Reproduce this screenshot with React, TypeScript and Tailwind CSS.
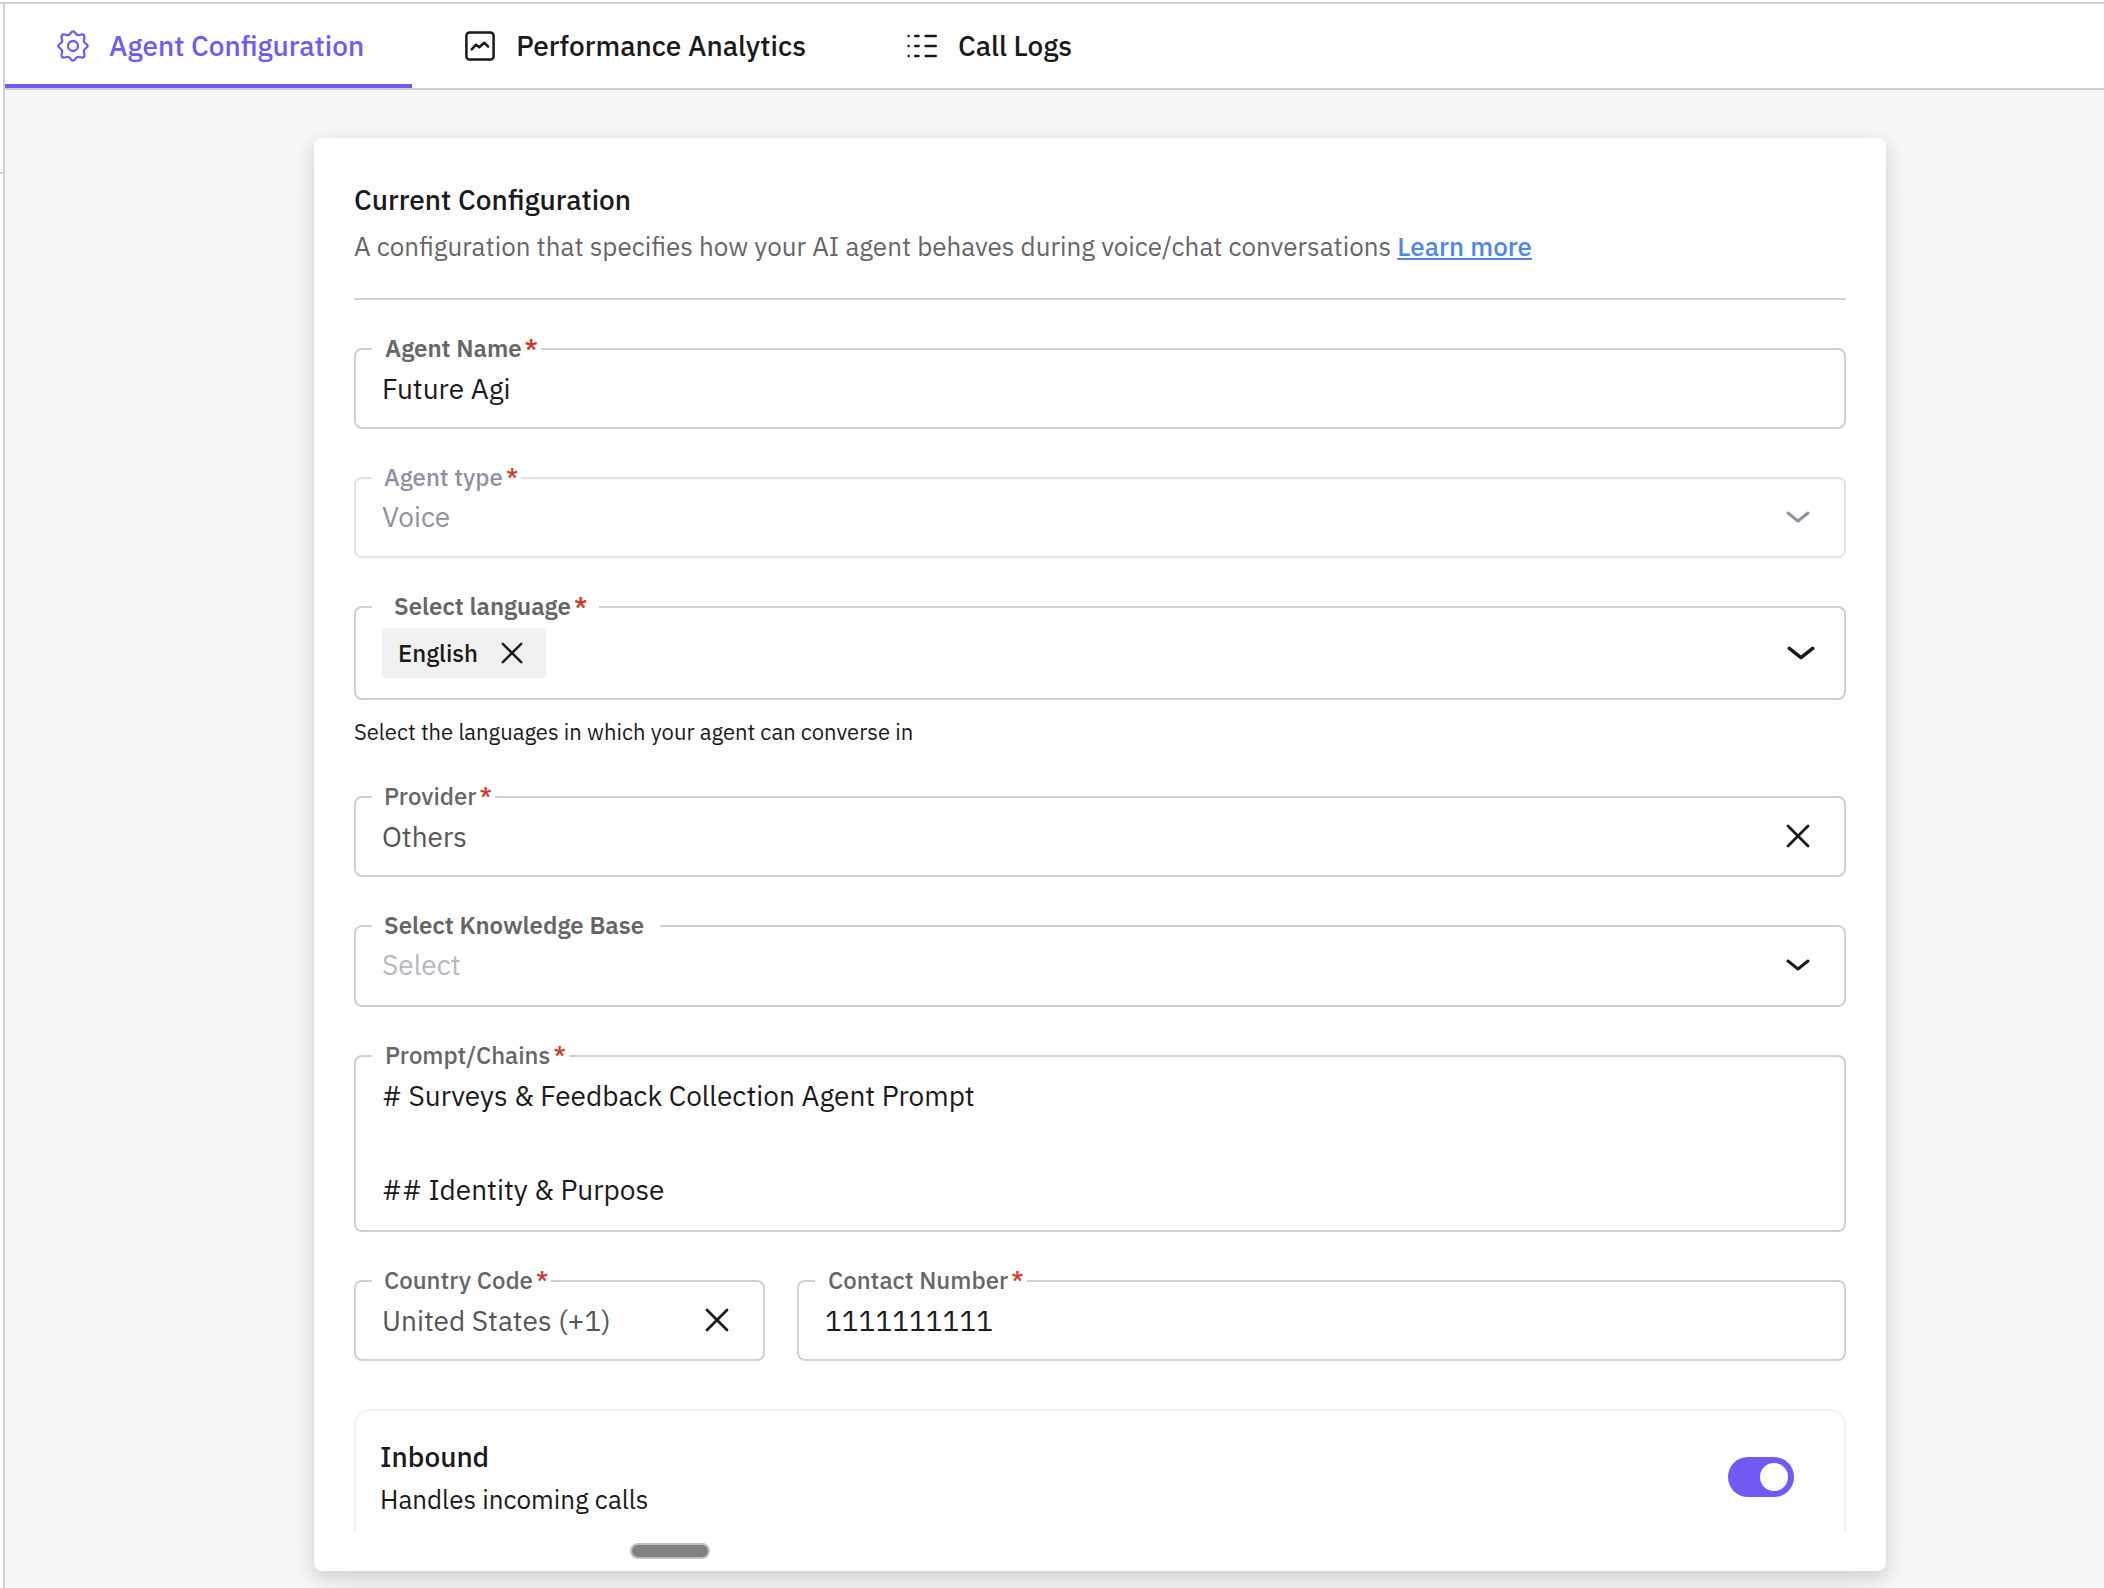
import type { ReactNode } from "react";

type IconProps = { className?: string };

const GearIcon = ({ className }: IconProps) => (
    <svg className={className} viewBox="0 0 32 32" fill="none" stroke="currentColor" strokeWidth="2.3" strokeLinejoin="round">
        <path d="M16 1.3C18.4 1.3 18.4 5.2 21 5.2 23.4 5.2 25.2 3.4 26.9 5.1 28.6 6.8 26.8 8.6 26.8 11 26.8 13.6 30.7 13.6 30.7 16 30.7 18.4 26.8 18.4 26.8 21 26.8 23.4 28.6 25.2 26.9 26.9 25.2 28.6 23.4 26.8 21 26.8 18.4 26.8 18.4 30.7 16 30.7 13.6 30.7 13.6 26.8 11 26.8 8.6 26.8 6.8 28.6 5.1 26.9 3.4 25.2 5.2 23.4 5.2 21 5.2 18.4 1.3 18.4 1.3 16 1.3 13.6 5.2 13.6 5.2 11 5.2 8.6 3.4 6.8 5.1 5.1 6.8 3.4 8.6 5.2 11 5.2 13.6 5.2 13.6 1.3 16 1.3Z" />
        <circle cx="16" cy="16" r="5" />
    </svg>
);

const ChartIcon = ({ className }: IconProps) => (
    <svg className={className} viewBox="0 0 32 32" fill="none" stroke="currentColor" strokeWidth="2.5" strokeLinecap="round" strokeLinejoin="round">
        <rect x="2.4" y="2.4" width="27.2" height="27.2" rx="3.2" />
        <path d="m7.7 19.3 4.3-4.6 3.2 2.6 5.1-4.6 3.8 4" />
    </svg>
);

const LogsIcon = ({ className }: IconProps) => (
    <svg className={className} viewBox="0 0 32 32" fill="none" stroke="currentColor" strokeWidth="2.4" strokeLinecap="round">
        <path d="M2.6 6h.1M9.2 6h3.4M19.6 6h10.2M2.6 16h.1M9.2 16h3.4M19.6 16h10.2M2.6 26h.1M9.2 26h3.4M19.6 26h10.2" />
    </svg>
);

const ChevronIcon = ({ className }: IconProps) => (
    <svg className={className} viewBox="0 0 24 12" fill="none" stroke="currentColor" strokeWidth="3" strokeLinecap="round" strokeLinejoin="round">
        <path d="m2 2 10 8 10-8" />
    </svg>
);

const CloseIcon = ({ className }: IconProps) => (
    <svg className={className} viewBox="0 0 24 24" fill="none" stroke="currentColor" strokeWidth="2.8" strokeLinecap="round">
        <path d="m2 2 20 20M22 2 2 22" />
    </svg>
);

type FieldProps = {
    id: string;
    label: string;
    required?: boolean;
    disabled?: boolean;
    className?: string;
    legendClass?: string;
    labelClass?: string;
    children: ReactNode;
};

const Field = ({ id, label, required, disabled, className = "h-[92px]", legendClass = "pl-3 pr-[3px]", labelClass = "font-medium", children }: FieldProps) => (
    <fieldset className={`min-w-0 rounded-lg border-2 ${disabled ? "border-[#e2e2e8]" : "border-[#d0d0d0]"} ${className}`}>
        <legend className={`ml-4 h-6 text-2xl leading-[22px] whitespace-nowrap ${legendClass} ${labelClass}`}>
            <label htmlFor={id} className={disabled ? "text-[#938fa3]" : "text-[#666]"}>
                {label}
            </label>
            {required && <span className="ml-[3px] text-[#cf3a2e]">*</span>}
        </legend>
        {children}
    </fieldset>
);

const inputClass = "h-[54px] w-full min-w-0 appearance-none bg-transparent text-[28px] outline-none";

const tabs = [
    { label: "Agent Configuration", icon: GearIcon, active: true },
    { label: "Performance Analytics", icon: ChartIcon, active: false },
    { label: "Call Logs", icon: LogsIcon, active: false },
];

const App = () => {
    return (
        <div className="flex min-h-screen flex-col bg-white pt-0.5 font-['IBM_Plex_Sans',Roboto,sans-serif] text-[#1a1a1a]">
            <div className="flex flex-1 border-t-2 border-[#d0d0d0]">
                <div className="w-[3px] shrink-0">
                    <div className="h-[170px] border-b-2 border-[#d0d0d0]"></div>
                </div>
                <main className="flex min-w-0 flex-1 flex-col border-l-2 border-[#d0d0d0] bg-[#f7f7f7]">
                    <nav className="flex border-b-2 border-[#d0d0d0] bg-white">
                        {tabs.map(({ label, icon: Icon, active }) => (
                            <button
                                key={label}
                                type="button"
                                className={`flex h-[84px] items-center gap-4 border-b-4 px-12 pt-1 text-[28px] font-medium ${active ? "border-[#7159f3] text-[#7159f3]" : "border-transparent"}`}
                            >
                                <span className="flex w-10 justify-center">
                                    <Icon className="size-8" />
                                </span>
                                {label}
                            </button>
                        ))}
                    </nav>

                    <div className="pt-12 pr-[218px] pb-4 pl-[309px]">
                        <div className="rounded-lg bg-white px-10 pt-10 pb-3 shadow-[0_6px_18px_rgba(30,30,70,0.16),0_12px_40px_rgba(0,0,0,0.04)]">
                            <h1 className="text-[28px] leading-[44px] font-medium">Current Configuration</h1>
                            <p className="mt-0.5 text-[26px] leading-[44px] text-[#666]">
                                A configuration that specifies how your AI agent behaves during voice/chat conversations{" "}
                                <a href="#" className="font-medium text-[#4d87ea] underline">
                                    Learn more
                                </a>
                            </p>

                            <form className="mt-[30px] flex flex-col gap-[37px] border-t-2 border-[#d0d0d0] pt-[37px]">
                                <Field id="name" label="Agent Name" required labelClass="font-semibold" legendClass="pl-[13px] pr-[3px]">
                                    <input id="name" className={`${inputClass} px-[26px]`} defaultValue="Future Agi" />
                                </Field>

                                <Field id="type" label="Agent type" required disabled>
                                    <div className="flex items-center pr-[34px] text-[#938fa3]">
                                        <select id="type" disabled className={`${inputClass} px-[26px] opacity-100`}>
                                            <option>Voice</option>
                                        </select>
                                        <ChevronIcon className="h-3 w-6 shrink-0" />
                                    </div>
                                </Field>

                                <div>
                                    <Field id="language" label="Select language" required labelClass="font-semibold" legendClass="pl-[22px] pr-3" className="h-[105px]">
                                        <div className="flex items-center justify-between pt-[9px] pr-[29px] pl-[26px]">
                                            <span className="flex h-[50px] items-center gap-[23px] rounded bg-[#f1f1f1] pr-[23px] pl-4 text-2xl font-medium">
                                                English
                                                <button type="button" aria-label="Remove English">
                                                    <CloseIcon className="size-[22px]" />
                                                </button>
                                            </span>
                                            <button id="language" type="button" aria-label="Open languages">
                                                <ChevronIcon className="h-[14px] w-7" />
                                            </button>
                                        </div>
                                    </Field>
                                    <p className="mt-4 text-[22px] leading-8">Select the languages in which your agent can converse in</p>
                                </div>

                                <Field id="provider" label="Provider" required>
                                    <div className="flex items-center pr-[34px]">
                                        <input id="provider" className={`${inputClass} px-[26px] text-[#555]`} defaultValue="Others" />
                                        <button type="button" aria-label="Clear provider">
                                            <CloseIcon className="size-6" />
                                        </button>
                                    </div>
                                </Field>

                                <Field id="kb" label="Select Knowledge Base" labelClass="font-semibold" legendClass="pl-3 pr-4" className="h-[93px]">
                                    <div className="flex items-center pr-[34px]">
                                        <select id="kb" className={`${inputClass} px-[26px] text-[#b8b6c4]`}>
                                            <option>Select</option>
                                        </select>
                                        <ChevronIcon className="h-3 w-6 shrink-0" />
                                    </div>
                                </Field>

                                <Field id="prompt" label="Prompt/Chains" required legendClass="pl-[13px] pr-[3px]" className="h-[188px]">
                                    <textarea
                                        id="prompt"
                                        className="block h-[156px] w-full resize-none overflow-hidden bg-transparent px-[26px] pt-1 text-[28px] leading-[47px] outline-none"
                                        defaultValue={"# Surveys & Feedback Collection Agent Prompt\n\n## Identity & Purpose"}
                                    />
                                </Field>

                                <div className="grid grid-cols-[411px_1fr] gap-8">
                                    <Field id="country" label="Country Code" required>
                                        <div className="flex items-center pr-[34px]">
                                            <input id="country" className={`${inputClass} pl-[26px] text-[#555]`} defaultValue="United States (+1)" />
                                            <button type="button" aria-label="Clear country code">
                                                <CloseIcon className="size-6" />
                                            </button>
                                        </div>
                                    </Field>
                                    <Field id="phone" label="Contact Number" required legendClass="pl-[13px] pr-[3px]">
                                        <input id="phone" className={`${inputClass} px-[26px]`} defaultValue="1111111111" />
                                    </Field>
                                </div>

                                <section className="mt-[11px] flex h-[122px] items-start justify-between rounded-t-2xl border-2 border-b-0 border-[#f1f1f1] pt-6 pr-[50px] pl-6">
                                    <label htmlFor="inbound">
                                        <span className="block text-[28px] leading-[44px] font-medium">Inbound</span>
                                        <span className="block text-[26px] leading-10">Handles incoming calls</span>
                                    </label>
                                    <input
                                        id="inbound"
                                        type="checkbox"
                                        role="switch"
                                        defaultChecked
                                        className="mt-[22px] h-10 w-[66px] appearance-none rounded-full bg-gray-300 p-1.5 before:block before:size-7 before:rounded-full before:bg-white checked:bg-[#7159f3] checked:before:ml-auto"
                                    />
                                </section>
                            </form>

                            <div className="mt-3 ml-[276px] h-4 w-20 rounded-full border-2 border-[#c0c0c0] bg-[#808080]"></div>
                        </div>
                    </div>
                </main>
            </div>
        </div>
    );
};

export default App;
